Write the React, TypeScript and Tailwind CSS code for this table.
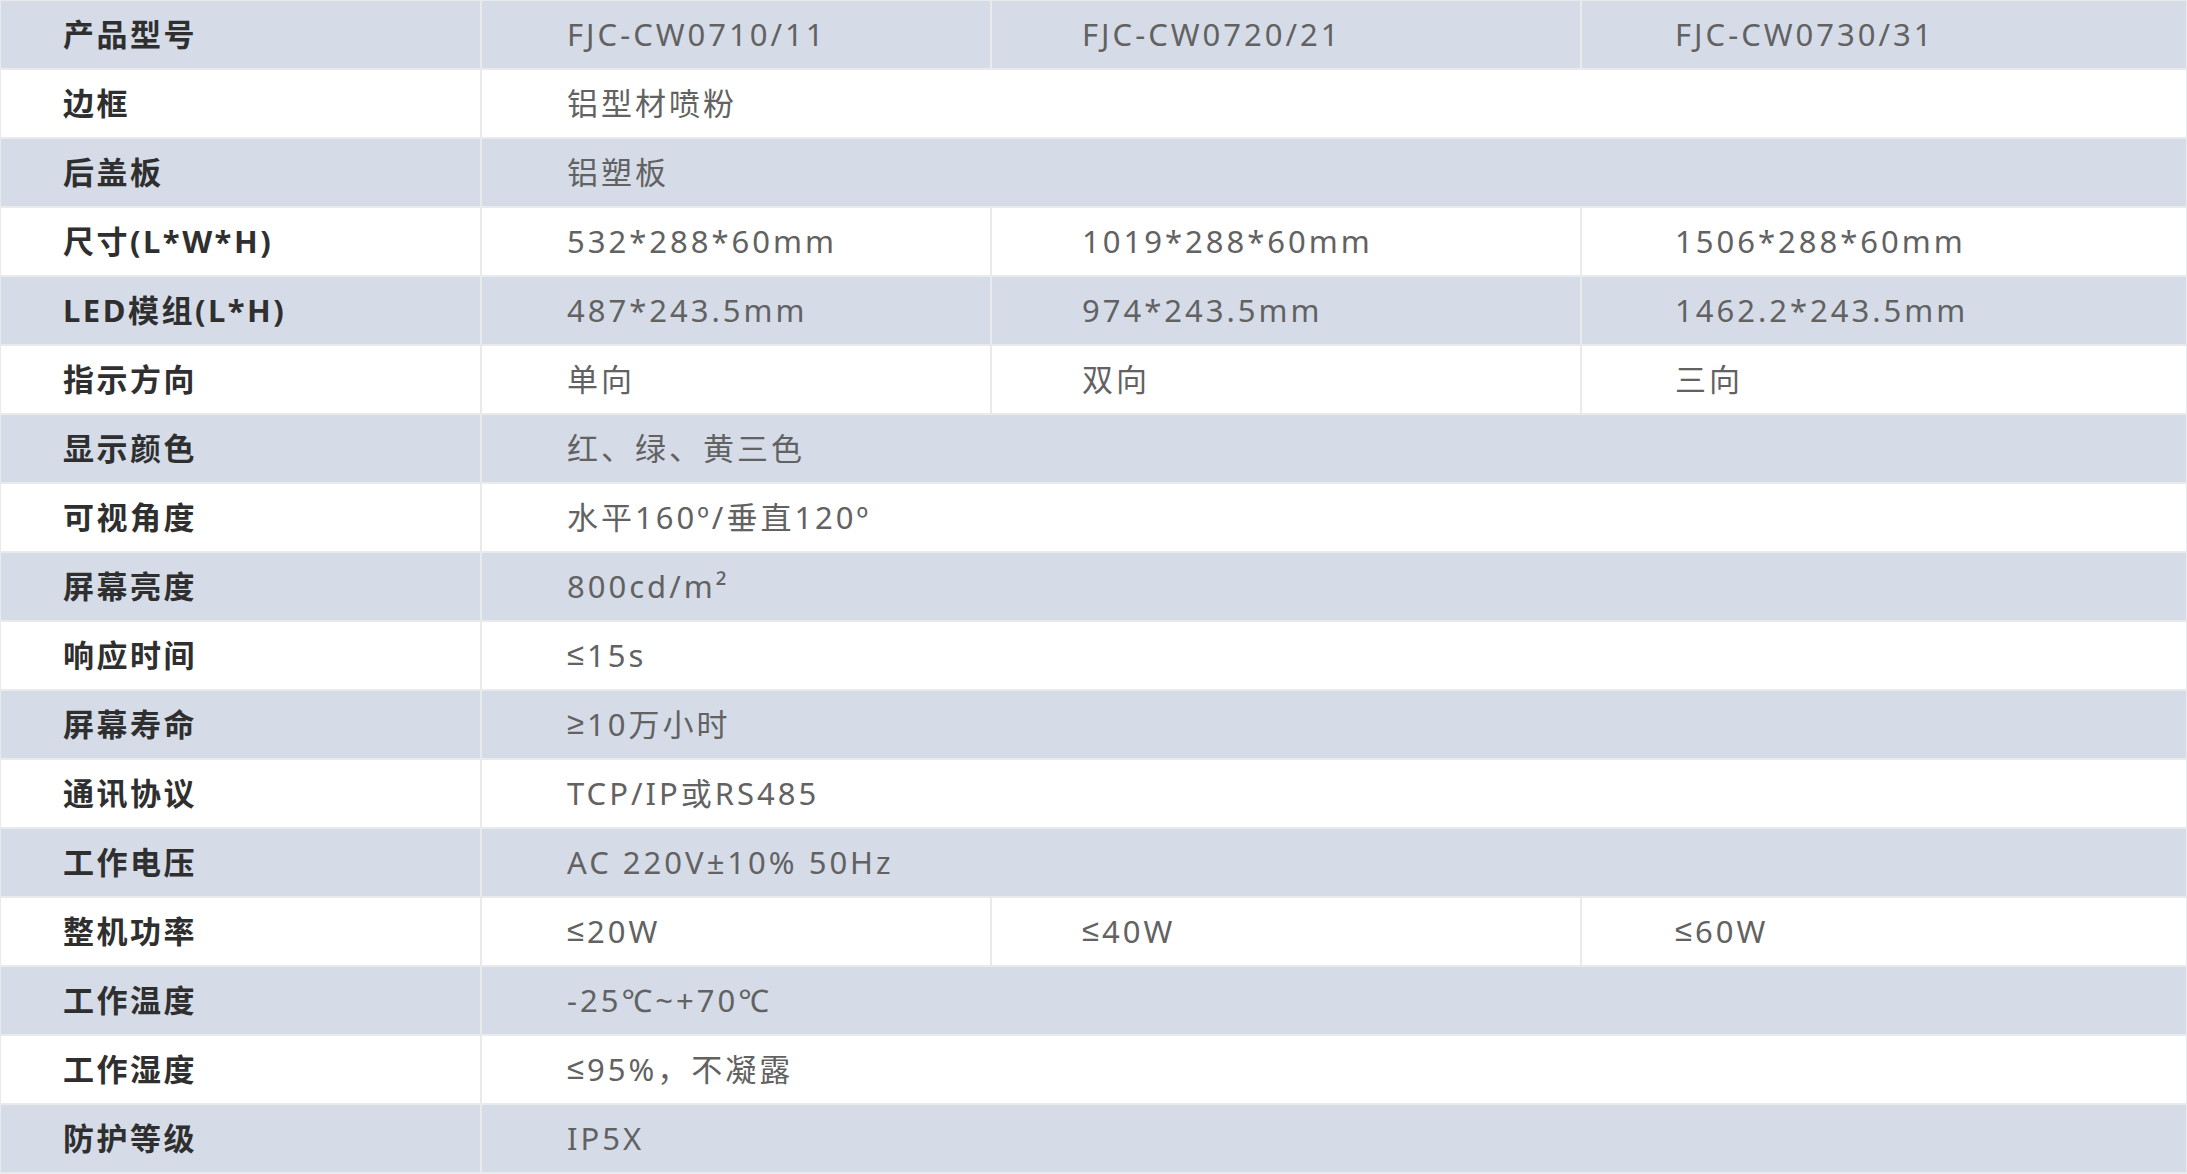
import React from "react";

type Row = { label: string; values: string[] };

const rows: Row[] = [
  { label: "产品型号", values: ["FJC-CW0710/11", "FJC-CW0720/21", "FJC-CW0730/31"] },
  { label: "边框", values: ["铝型材喷粉"] },
  { label: "后盖板", values: ["铝塑板"] },
  { label: "尺寸(L*W*H)", values: ["532*288*60mm", "1019*288*60mm", "1506*288*60mm"] },
  { label: "LED模组(L*H)", values: ["487*243.5mm", "974*243.5mm", "1462.2*243.5mm"] },
  { label: "指示方向", values: ["单向", "双向", "三向"] },
  { label: "显示颜色", values: ["红、绿、黄三色"] },
  { label: "可视角度", values: ["水平160º/垂直120º"] },
  { label: "屏幕亮度", values: ["800cd/m²"] },
  { label: "响应时间", values: ["≤15s"] },
  { label: "屏幕寿命", values: ["≥10万小时"] },
  { label: "通讯协议", values: ["TCP/IP或RS485"] },
  { label: "工作电压", values: ["AC 220V±10% 50Hz"] },
  { label: "整机功率", values: ["≤20W", "≤40W", "≤60W"] },
  { label: "工作温度", values: ["-25℃~+70℃"] },
  { label: "工作湿度", values: ["≤95%，不凝露"] },
  { label: "防护等级", values: ["IP5X"] },
];

// column widths incl. right border, and left padding of each column
const cellCls = [
  "w-[481px] pl-[62px]",
  "w-[510px] pl-[85px]",
  "w-[590px] pl-[90px]",
  "flex-1 pl-[93px]",
];

// ≤ / ≥ look wrong in the CJK font, use a latin one for them
const Value = ({ text }: { text: string }) => {
  const m = text.match(/^([≤≥])(.*)$/);
  if (!m) return <>{text}</>;
  return (
    <>
      <span className="font-['Liberation_Sans',sans-serif]">{m[1]}</span>
      {m[2]}
    </>
  );
};

export default function App() {
  return (
    <div className="w-[2187px] h-[1174px] bg-white border-t border-l border-r border-[#e9eaec] font-['Noto_Sans','Noto_Sans_CJK_SC',sans-serif] text-[31px] overflow-hidden">
      {rows.map((row, i) => (
        <div
          key={row.label}
          className={`flex h-[69px] border-b-2 border-[#e9eaec] ${i % 2 === 0 ? "bg-[#d5dce8]" : "bg-white"}`}
        >
          <div className={`${cellCls[0]} flex items-center border-r-2 border-[#e9eaec] font-bold text-[#2f2f2f] tracking-[2.5px]`}>
            {row.label}
          </div>
          {row.values.length === 1 ? (
            <div className="flex-1 pl-[85px] flex items-center text-[#626262] tracking-[3px]">
              <Value text={row.values[0]} />
            </div>
          ) : (
            row.values.map((v, j) => (
              <div
                key={j}
                className={`${cellCls[j + 1]} flex items-center text-[#626262] tracking-[3px] ${j < 2 ? "border-r-2 border-[#e9eaec]" : ""}`}
              >
                <Value text={v} />
              </div>
            ))
          )}
        </div>
      ))}
    </div>
  );
}
